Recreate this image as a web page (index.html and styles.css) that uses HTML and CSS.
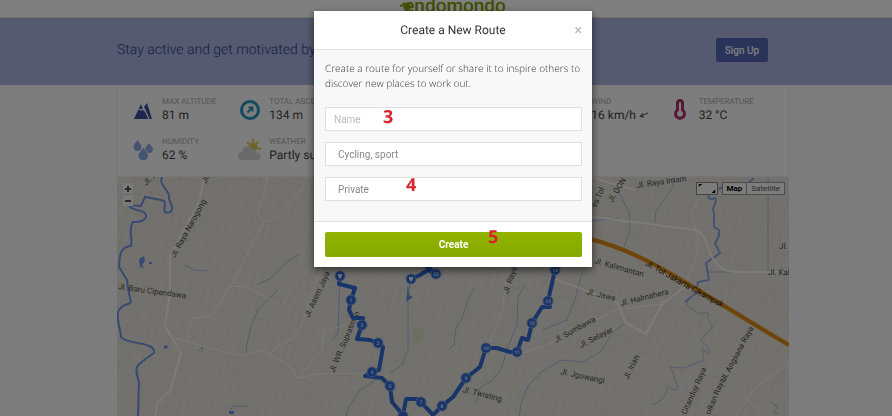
FILE: index.html
```html
<!DOCTYPE html>
<html lang="en">
<head>
<meta charset="utf-8">
<title>Endomondo – Create a New Route</title>
<link rel="stylesheet" href="styles.css">
</head>
<body>
<div class="page">
  <header class="topbar">
    <a class="logo" href="#">
      <svg class="logo-lines" viewBox="0 0 14 12" aria-hidden="true"><path d="M3 2H12M0 4.500H12M4 7H13M5 9.500H12"/></svg>
      <span>endomondo</span>
    </a>
  </header>
  <section class="banner">
    <div class="banner-inner">
      <p>Stay active and get motivated by friends</p>
      <button class="signup" type="button">Sign Up</button>
    </div>
  </section>
  <main class="workout">
    <section class="stats">
      <div class="stat">
        <svg viewBox="0 0 24 24"><path fill="#3a4c9c" d="M3 21 10 6l2 5 2-1 1.500 3L18 21ZM13 9l3-4 5 16h-3Z"/><path fill="none" stroke="#fff" stroke-width="1.200" d="m8 11 2 1 2-1 2 2M13 10l5 11"/></svg>
        <div><h3>Max altitude</h3><p>81 m</p></div>
      </div>
      <div class="stat">
        <svg viewBox="0 0 24 24"><circle cx="12" cy="12" r="8.500" fill="none" stroke="#2596bd" stroke-width="3"/><path fill="none" stroke="#2596bd" stroke-width="2" d="m9.500 14.500 5-5M10.500 9.500h4v4"/></svg>
        <div><h3>Total ascent</h3><p>134 m</p></div>
      </div>
      <div class="stat stat-wind">
        <svg viewBox="0 0 24 24"></svg>
        <div><h3>Wind</h3><p>16 km/h <svg class="arrow" viewBox="0 0 10 8"><path d="M9 2 2 5M4 2 1 5.500 5 6"/></svg></p></div>
      </div>
      <div class="stat">
        <svg viewBox="0 0 24 24"><path fill="none" stroke="#b03060" stroke-width="3" d="M9.500 12V5a2.500 2.500 0 0 1 5 0v7a4.500 4.500 0 1 1-5 0Z"/></svg>
        <div><h3>Temperature</h3><p>32 °C</p></div>
      </div>
      <div class="stat stat-row">
        <svg viewBox="0 0 24 24"><g fill="#88a6e0"><path d="M6.500 2c2 3 4 4.500 4 7a4 4 0 0 1-8 0c0-2.500 2-4 4-7Z"/><path d="M18 5c2 3 4 4 4 6a4 4 0 0 1-8 0c0-2 2-3 4-6Z"/><path stroke="#fafafa" d="M12.500 9c2.500 4 5 5.500 5 8.500a5 5 0 0 1-10.500 0c0-3 3-4.500 5.500-8.500Z"/></g></svg>
        <div><h3>Humidity</h3><p>62 %</p></div>
      </div>
      <div class="stat">
        <svg viewBox="0 0 24 24"><path stroke="#dcc64c" stroke-width="2" d="m9 4 2 2M15 1v3M20 4l-2 2M20 10l3 1"/><circle cx="15" cy="9" r="4.500" fill="#dcc64c"/><path fill="#d4d4d4" d="M4 22a4 4 0 0 1 0-8 6 6 0 0 1 11-3 5 5 0 0 1 4 4 3.500 3.500 0 0 1 0 7Z"/></svg>
        <div><h3>Weather</h3><p>Partly sunny</p></div>
      </div>
    </section>
    <section class="map">
      <svg class="map-art" viewBox="117 177 672 239" preserveAspectRatio="xMinYMin slice">
        <defs>
          <pattern id="blocks" width="46" height="38" patternUnits="userSpaceOnUse" patternTransform="rotate(12)">
            <path d="M0 5H16V22H30V9H46M8 38V22H16M30 22V38M23 0V9H30M38 9V30H46M0 30H8" fill="none" stroke="#d2cec3"/>
          </pattern>
        </defs>
        <rect x="117" y="177" width="672" height="239" fill="#e6e3da"/>
        <rect x="117" y="177" width="672" height="239" fill="url(#blocks)" opacity=".5"/>
        <ellipse cx="418" cy="335" rx="6" ry="8" fill="#d8e0c8"/>
        <g class="water">
          <path class="wide" d="M162 177C158 186 171 190 169 199C175 211 171 214 165 212C162 209 169 201 161 200L145 197 141 206C126 204 127 207 137 210C151 212 148 223 133 222C128 229 133 239 131 246C117 247 120 262 119 267L127 280C128 297 134 303 128 304C110 308 121 327 121 337C127 345 156 341 154 353C135 366 134 366 139 382L138 416"/>
          <path class="fill" d="m139 259 5-3 1 5-3 4 2 3-4-1Zm10 3 3 0v2h-3ZM164 346l3-1 1 3-4 1ZM229 411l5 0v3h-5Z"/>
          <path d="M230 411 233 406H248M257 285 271 278 289 260 299 255M185 265 194 270 208 271M246 353C247 333 254 321 258 309L278 290M198 351l5-5-1 6"/>
          <path d="M674 177 673 187 656 211 655 222M617 189 629 212 630 229 624 247M580 222 620 218"/>
          <path class="mid" d="M754 178 747 184 735 185 713 190C706 194 708 202 715 198C719 202 710 207 714 213L714 227 719 230 719 236 715 243 720 253 706 263 708 274 709 280 698 282 695 294 685 302"/>
          <path d="M708 272H770M768 177V272M697 293C683 301 684 307 701 314C713 308 703 317 712 325C714 330 700 337 701 341C714 350 711 357 702 349L704 360 684 368 671 367 678 388C673 395 665 380 667 390L663 399 652 405"/>
          <path d="M624 324C605 336 607 347 600 352L583 362 562 360 541 372 528 386 522 400 519 416M475 287C465 301 467 313 456 328L454 345 449 349M410 283 408 300V350L402 365 390 373M582 273 575 299 567 320 542 330M525 285 518 297 517 325 508 347 501 370 490 382 480 388 476 404M340 275 338 333 332 340M376 380 360 390 350 405 346 416M770 402l8 5-5 5 5 2"/>
        </g>
        <g class="roads">
          <path class="wide" d="M204 177 200 199 187 225 170 255V293L165 326 181 353 170 391 158 402 155 416"/>
          <path d="M268 177 258 214 264 222 239 270 228 290 211 316 192 318 186 342M264 222C279 221 289 203 305 184M175 338 206 347 242 356 262 350 290 366 297 379 322 350 324 331 346 325M268 356 279 345C301 340 303 318 309 302L330 245M228 287 245 286 282 306 290 290M297 379 313 374 372 373M346 325 348 333"/>
          <path class="wide" d="M590 177 635 190M580 215 695 230C713 236 704 269 733 272H789M555 279 617 302 626 323 646 334 662 304 685 287"/>
          <path d="M520 354 565 338 615 310 662 304M488 345 502 312 506 280M706 192C683 214 694 218 697 232C702 259 687 270 685 287M736 416 749 396C763 378 776 374 789 364M745 398 765 416"/>
        </g>
        <path d="M590 239C650 254 696 291 789 345" fill="none" stroke="#f2cf91" stroke-width="5"/>
        <path d="M590 239C650 254 696 291 789 345" fill="none" stroke="#d98b1c" stroke-width="4"/>
        <g class="road-names">
          <text transform="translate(175 258) rotate(-61)">Jl. Raya Narogong</text>
          <text transform="translate(146 186) rotate(-42)">Jl. R</text>
          <text transform="translate(206 184) rotate(-62)">Jl.</text>
          <text transform="translate(118 289) rotate(8)">Jl. Baru Cipendawa</text>
          <text transform="translate(309 318) rotate(-65)">Jl. Asem Jaya</text>
          <text transform="translate(334 373) rotate(-67)">Jl. WR. Supratman</text>
          <text transform="translate(508 294) rotate(-71)">Jl. Raya</text>
          <text transform="translate(462 392) rotate(14)">Jl. Twisting</text>
          <text transform="translate(556 343) rotate(-29)">Jl. Sumbawa</text>
          <text transform="translate(581 348) rotate(-27)">Jl. Selayar</text>
          <text transform="translate(560 374) rotate(12)">Jl. Jgowangi</text>
          <text transform="translate(637 188) rotate(-8)">Jl. Raya Imam</text>
          <text transform="translate(596 208) rotate(-66)">es Tol</text>
          <text transform="translate(612 203) rotate(-58)">Jl. OON</text>
          <text transform="translate(594 263) rotate(16)">Jl. Kalimantan</text>
          <text class="major" transform="translate(645 265) rotate(29)">Jl. Tol Jakarta-Cikampek</text>
          <text transform="translate(586 294) rotate(14)">Jl. Jawa</text>
          <text transform="translate(621 306) rotate(-14)">Jl. Halmahera</text>
          <text transform="translate(768 275)">Jl. Kal</text>
          <text transform="translate(779 249)">Jl.</text>
          <text transform="translate(628 380) rotate(-64)">Jl. Irian</text>
          <text transform="translate(725 382) rotate(-62)">Jl. Angsana Raya</text>
          <text transform="translate(686 415) rotate(-66)">Citanduy Raya</text>
          <text transform="translate(710 415) rotate(-67)">olkan Raya</text>
        </g>
        <path fill="#6c94e2" d="m408 284-2 18 7-5-4-2Z"/>
        <path class="route" d="M340 276 339 284 355 288 351 300 349 310 353 318H363L362 325 357 339 370 340 378 343 383 347 379 370 372 372 365 376 382 378 390 386 392 402 403 415 406 399H417L421 402 433 415 442 406 453 397 466 378 480 367 486 348 497 348 510 352H517L522 338 528 340 532 323 542 307H550L548 301 555 270 561 264M411 279 420 275 428 270 436 274M425 265 434 272"/>
        <g class="pins">
          <g><circle cx="340" cy="276" r="5"/><circle cx="351" cy="300" r="5"/><circle cx="362" cy="325" r="5"/><circle cx="378" cy="343" r="5"/><circle cx="372" cy="372" r="5"/><circle cx="390" cy="386" r="5"/><circle cx="403" cy="416" r="5"/><circle cx="421" cy="402" r="5"/><circle cx="442" cy="406" r="5"/><circle cx="466" cy="378" r="5"/><circle cx="486" cy="348" r="5"/><circle cx="517" cy="352" r="5"/><circle cx="532" cy="323" r="5"/><circle cx="548" cy="301" r="5"/><circle cx="555" cy="270" r="5"/><circle cx="411" cy="279" r="5"/><circle cx="436" cy="274" r="5"/></g>
          <path fill="#e8eefc" d="M338 274h4v2l-2 3-2-3ZM409 277h4v2l-2 3-2-3Z"/>
          <text x="351" y="302">1</text><text x="362" y="327">2</text><text x="378" y="345">3</text><text x="372" y="374">4</text><text x="390" y="388">5</text><text x="421" y="404">7</text><text x="442" y="408">8</text><text x="466" y="380">9</text><text x="486" y="350">10</text><text x="517" y="354">11</text><text x="532" y="325">12</text><text x="548" y="303">13</text><text x="555" y="272">14</text><text x="436" y="276">22</text>
        </g>
      </svg>
      <div class="zoomer">
        <button type="button" aria-label="Zoom in"><svg viewBox="0 0 10 10"><path d="M2 5h6M5 2v6"/></svg></button>
        <button type="button" aria-label="Zoom out"><svg viewBox="0 0 10 10"><path d="M2 5h6"/></svg></button>
      </div>
      <div class="map-types">
        <button class="expand" type="button" aria-label="Full screen"><svg viewBox="0 0 20 12"><path d="M1 1h4L1 4ZM19 11h-4l4-4Z"/></svg></button>
        <div class="switch"><button class="on" type="button">Map</button><button type="button">Satellite</button></div>
      </div>
    </section>
  </main>
</div>
<div class="overlay">
  <form class="modal" role="dialog" aria-labelledby="modal-title">
    <header class="modal-head">
      <h2 id="modal-title">Create a New Route</h2>
      <button class="close" type="button" aria-label="Close">×</button>
    </header>
    <div class="modal-body">
      <p>Create a route for yourself or share it to inspire others to discover new places to work out.</p>
      <input class="field" type="text" placeholder="Name" aria-label="Name">
      <select class="field" aria-label="Sport"><option>Cycling, sport</option></select>
      <select class="field" aria-label="Privacy"><option>Private</option></select>
    </div>
    <footer class="modal-foot"><button class="create" type="submit">Create</button></footer>
    <span class="step step-name">3</span>
    <span class="step step-privacy">4</span>
    <span class="step step-create">5</span>
  </form>
</div>
</body>
</html>
```
FILE: styles.css
```css
* { box-sizing: border-box; }
body, h2, h3, p { margin: 0; font-weight: 400; }
body { font-family: Roboto, "Liberation Sans", sans-serif; color: #333; overflow: hidden; text-rendering: geometricPrecision; }
button, input, select { font-family: inherit; margin: 0; padding: 0; border: 0; }

.page { display: flex; flex-direction: column; height: 100vh; background: #f8f8f8; }
.topbar { height: 18px; flex: none; padding-left: 14px; display: flex; justify-content: center; align-items: flex-end; background: #fff; border-bottom: 1px solid #e4e4e4; }
.logo { display: flex; align-items: center; color: #7fa000; text-decoration: none; font-size: 19px; line-height: 20px; font-weight: 500; margin-bottom: 1px; }
.logo-lines { width: 12px; height: 12px; margin-right: -8px; margin-top: 2px; stroke: #7fa000; stroke-width: 2; fill: none; }

.banner { flex: none; padding-left: 14px; background: #aab4e0; }
.banner-inner { width: 100%; max-width: 672px; height: 67px; margin: 0 auto; display: flex; align-items: center; justify-content: space-between; padding: 0 21px 3px 0; }
.banner p { font-size: 14px; line-height: 20px; font-weight: 300; color: #2c3c8c; }
.signup { height: 24px; width: 52px; border-radius: 2px; background: #5466b4; color: #fff; font-size: 10px; font-weight: 500; }

.workout { flex: 1; min-height: 0; width: 100%; max-width: 686px; margin: 0 auto; padding-left: 14px; display: flex; flex-direction: column; }
.stats { flex: none; display: grid; grid-template-columns: repeat(6, 1fr); row-gap: 12px; padding: 11px 13px 12px; height: 92px; background: #fafafa; border: 1px solid #ededed; border-top: 0; }
.stat { display: flex; gap: 7px; height: 28px; white-space: nowrap; }
.stat > svg { width: 24px; height: 24px; flex: none; margin-top: 2px; }
.stat h3 { font-size: 8px; line-height: 12px; color: #aaa; text-transform: uppercase; }
.stat p { font-size: 12px; line-height: 14px; color: #444; }
.stat .arrow { width: 10px; height: 8px; fill: none; stroke: #444; }
.stat-wind { grid-column: 5; }
.stat-row { grid-column: 1; }

.map { flex: 1; min-height: 0; position: relative; overflow: hidden; }
.map-art { width: 100%; height: 100%; display: block; }
.water path { fill: none; stroke: #a8b8e0; stroke-width: 1; }
.water .wide { stroke: #6f94e4; stroke-width: 2; }
.water .mid { stroke: #88a4e6; stroke-width: 2; }
.water .fill { fill: #6f94e4; stroke: none; }
.roads path { fill: none; stroke: #f8f6f0; stroke-width: 1; }
.roads .wide { stroke-width: 2; }
.road-names { font-size: 8px; fill: #4c4c4c; }
.road-names .major { fill: #302010; }
.route { fill: none; stroke: #3068d0; stroke-width: 4; stroke-linejoin: round; }
.pins circle { fill: #3068d0; stroke: #7ea2e8; stroke-width: 1; }
.pins text { font-size: 5px; font-weight: 700; fill: #d4e0fa; text-anchor: middle; }
.zoomer { position: absolute; left: 6px; top: 6px; display: flex; flex-direction: column; gap: 1px; background: #ccc; }
.zoomer button { width: 10px; height: 11px; background: #f4f4f4; display: flex; align-items: center; }
.zoomer svg { width: 10px; height: 10px; stroke: #555; stroke-width: 2; }
.map-types { position: absolute; right: 4px; top: 5px; display: flex; gap: 4px; }
.expand { width: 22px; height: 13px; background: #fafafa; border: 1px solid #888; }
.expand svg { width: 20px; height: 11px; display: block; }
.switch { display: flex; height: 13px; border: 1px solid #999; background: #fafafa; }
.switch button { background: none; font-size: 8px; padding: 0 4px; color: #555; }
.switch .on { color: #000; font-weight: 700; border-right: 1px solid #999; }

.overlay { position: fixed; inset: 0; padding: 11px 0 0 14px; display: flex; justify-content: center; align-items: flex-start; background: rgba(0, 0, 0, .5); }
.modal { position: relative; width: 278px; background: #fff; box-shadow: 0 3px 8px rgba(0, 0, 0, .6); }
.modal-head { display: flex; align-items: center; justify-content: center; height: 39px; border-bottom: 1px solid #e2e2e2; }
.modal-head h2 { font-size: 12px; line-height: 16px; color: #333; }
.close { position: absolute; right: 10px; top: 11px; background: none; color: #bbb; font-size: 14px; line-height: 16px; font-weight: 500; }
.modal-body { display: flex; flex-direction: column; gap: 11px; padding: 11px 10px 20px 11px; background: #f8f8f8; border-bottom: 1px solid #e2e2e2; }
.modal-body p { font-family: "Open Sans", Roboto, sans-serif; font-size: 10px; line-height: 15px; color: #333; font-weight: 300; margin: 0 -8px 5px 0; }
.field { appearance: none; width: 100%; height: 24px; border: 1px solid #e0e0e0; border-radius: 0; background: #fff; font-size: 10px; color: #888; padding: 0 12px; }
input.field { padding: 0 8px; }
.field::placeholder { color: #bbb; }
.modal-foot { padding: 10px 10px 10px 11px; }
.create { display: block; width: 100%; height: 25px; border-radius: 2px; background: linear-gradient(#92b400, #84a800); color: #fff; font-size: 10px; font-weight: 700; }
.step { position: absolute; font-family: "Open Sans", sans-serif; font-size: 18px; line-height: 20px; font-weight: 700; color: #d8232a; }
.step-name { left: 69px; top: 96px; }
.step-privacy { left: 92px; top: 164px; }
.step-create { left: 174px; top: 216px; }
```
